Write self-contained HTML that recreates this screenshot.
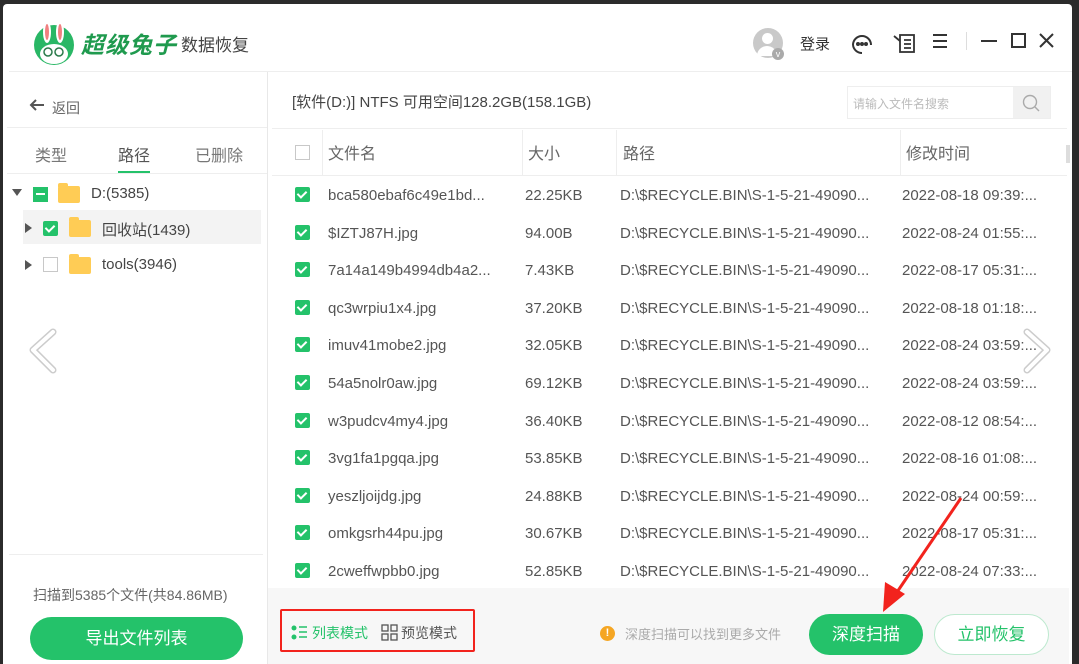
<!DOCTYPE html>
<html><head><meta charset="utf-8"><style>
*{margin:0;padding:0;box-sizing:border-box}
body{width:1079px;height:662px;background:#2b2b2b;position:relative;overflow:hidden;font-family:"Liberation Sans","Noto Sans CJK SC",sans-serif;color:#333}
.win{position:absolute;left:3px;top:4px;width:1069px;height:660px;background:#fff;border-radius:4px 4px 0 0;overflow:hidden}
.a{position:absolute}
.cb{position:absolute;width:15px;height:15px;background:#24c26a;border-radius:2px}
.cb:after{content:"";position:absolute;left:4px;top:2px;width:4px;height:7px;border:solid #fff;border-width:0 2px 2px 0;transform:rotate(45deg)}
.ecb{position:absolute;width:15px;height:15px;border:1px solid #c8c8c8;background:#fff}
.row{position:absolute;left:269px;width:795px;height:37px;font-size:15px;color:#555}
.row span{position:absolute;top:11px;white-space:nowrap}
.fold{position:absolute;width:22px;height:17px;background:#ffcc55;border-radius:2px}
.fold:before{content:"";position:absolute;left:0;top:-3px;width:10px;height:4px;background:#ffcc55;border-radius:2px 2px 0 0}
.hd{position:absolute;top:136px;font-size:16px;color:#666}
.vs{position:absolute;top:126px;width:1px;height:46px;background:#eee}
</style></head><body>
<div class="win">
<svg class="a" style="left:28px;top:16px" width="46" height="46" viewBox="0 0 46 46">
<circle cx="23" cy="25" r="20" fill="#29b765"/>
<ellipse cx="16" cy="12" rx="4" ry="11" fill="#fff"/><ellipse cx="29" cy="12" rx="4" ry="11" fill="#fff"/>
<ellipse cx="16" cy="12" rx="2" ry="8" fill="#f08080"/><ellipse cx="29" cy="12" rx="2" ry="8" fill="#f08080"/>
<ellipse cx="23" cy="34" rx="14" ry="10" fill="#fff"/>
<circle cx="17" cy="32" r="4" fill="none" stroke="#2a7a4a" stroke-width="1.5"/><circle cx="28" cy="32" r="4" fill="none" stroke="#2a7a4a" stroke-width="1.5"/>
</svg>
<div class="a" style="left:78px;top:22px;font-size:23px;font-weight:bold;color:#1f9a4e;font-style:italic;letter-spacing:1px">超级兔子</div>
<div class="a" style="left:178px;top:27px;font-size:17px;color:#444">数据恢复</div>
<div class="a" style="left:750px;top:24px;width:30px;height:30px;border-radius:50%;background:#c9c9c9"></div>
<div class="a" style="left:759px;top:29px;width:11px;height:11px;border-radius:50%;background:#fff"></div>
<div class="a" style="left:754px;top:42px;width:20px;height:10px;border-radius:10px 10px 0 0;background:#fff"></div>
<div class="a" style="left:769px;top:44px;width:12px;height:12px;border-radius:50%;background:#aaa;color:#fff;font-size:9px;text-align:center;line-height:12px">v</div>
<div class="a" style="left:797px;top:29px;font-size:15px;color:#333">登录</div>
<svg class="a" style="left:846px;top:26px" width="26" height="26" viewBox="0 0 26 26" fill="none" stroke="#333" stroke-width="2"><path d="M4 15a9 9 0 1 1 18 0"/><path d="M4 15a9 9 0 0 0 9 8"/><circle cx="9" cy="14" r="1" fill="#333"/><circle cx="13" cy="14" r="1" fill="#333"/><circle cx="17" cy="14" r="1" fill="#333"/></svg>
<svg class="a" style="left:889px;top:26px" width="26" height="26" viewBox="0 0 26 26" fill="none" stroke="#333" stroke-width="1.8"><rect x="8" y="5" width="14" height="17"/><path d="M2 6l6 5M12 10h7M12 14h7M12 18h7"/></svg>
<svg class="a" style="left:928px;top:28px" width="18" height="18" stroke="#333" stroke-width="2"><path d="M2 3h14M2 9h14M2 15h14"/></svg>
<div class="a" style="left:963px;top:28px;width:1px;height:18px;background:#ddd"></div>
<svg class="a" style="left:976px;top:26px" width="80" height="22" stroke="#333" stroke-width="2" fill="none"><path d="M2 11h16"/><rect x="33" y="4" width="13" height="13"/><path d="M61 4l13 13M74 4L61 17"/></svg>
<div class="a" style="left:6px;top:67px;width:1063px;height:1px;background:#eee"></div>
<svg class="a" style="left:26px;top:94px" width="16" height="14" stroke="#555" stroke-width="2" fill="none"><path d="M15 7H2M7 2L2 7l5 5"/></svg>
<div class="a" style="left:49px;top:94px;font-size:14px;color:#666">返回</div>
<div class="a" style="left:4px;top:123px;width:260px;height:1px;background:#eee"></div>
<div class="a" style="left:32px;top:138px;font-size:16px;color:#777">类型</div>
<div class="a" style="left:115px;top:138px;font-size:16px;color:#555">路径</div>
<div class="a" style="left:115px;top:167px;width:32px;height:3px;background:#24c26a"></div>
<div class="a" style="left:192px;top:138px;font-size:16px;color:#777">已删除</div>
<div class="a" style="left:4px;top:169px;width:260px;height:1px;background:#eee"></div>
<div class="a" style="left:9px;top:185px;width:0;height:0;border-left:5px solid transparent;border-right:5px solid transparent;border-top:7px solid #555"></div>
<div class="a" style="left:30px;top:183px;width:15px;height:15px;background:#24c26a"><div style="position:absolute;left:3px;top:6px;width:9px;height:2px;background:#fff"></div></div>
<div class="fold" style="left:55px;top:182px"></div>
<div class="a" style="left:88px;top:181px;font-size:15px;color:#444">D:(5385)</div>
<div class="a" style="left:20px;top:206px;width:238px;height:34px;background:#f3f3f3"></div>
<div class="a" style="left:22px;top:219px;border-top:5px solid transparent;border-bottom:5px solid transparent;border-left:7px solid #555"></div>
<div class="cb" style="left:40px;top:217px"></div>
<div class="fold" style="left:66px;top:216px"></div>
<div class="a" style="left:99px;top:215px;font-size:15px;color:#444">回收站(1439)</div>
<div class="a" style="left:22px;top:256px;border-top:5px solid transparent;border-bottom:5px solid transparent;border-left:7px solid #555"></div>
<div class="ecb" style="left:40px;top:253px"></div>
<div class="fold" style="left:66px;top:253px"></div>
<div class="a" style="left:99px;top:252px;font-size:15px;color:#444">tools(3946)</div>
<div class="a" style="left:6px;top:550px;width:254px;height:1px;background:#eee"></div>
<div class="a" style="left:30px;top:581px;font-size:14px;color:#666">扫描到5385个文件(共84.86MB)</div>
<div class="a" style="left:27px;top:613px;width:213px;height:43px;border-radius:22px;background:#24c26a;color:#fff;font-size:17px;text-align:center;line-height:43px">导出文件列表</div>
<div class="a" style="left:264px;top:68px;width:1px;height:592px;background:#e8e8e8"></div>
<div class="a" style="left:289px;top:87px;font-size:15px;color:#444">[软件(D:)] NTFS 可用空间128.2GB(158.1GB)</div>
<div class="a" style="left:844px;top:82px;width:204px;height:33px;border:1px solid #eee"></div>
<div class="a" style="left:850px;top:91px;font-size:12px;color:#bbb">请输入文件名搜索</div>
<div class="a" style="left:1010px;top:83px;width:37px;height:31px;background:#f1f1f1"></div>
<svg class="a" style="left:1018px;top:89px" width="20" height="20" fill="none" stroke="#aaa" stroke-width="1.4"><circle cx="9" cy="9" r="6.5"/><path d="M14 14l4 4"/></svg>
<div class="a" style="left:269px;top:124px;width:795px;height:1px;background:#eee"></div>
<div class="a" style="left:269px;top:171px;width:795px;height:1px;background:#eee"></div>
<div class="ecb" style="left:292px;top:141px"></div>
<div class="vs" style="left:319px"></div><div class="vs" style="left:519px"></div><div class="vs" style="left:613px"></div><div class="vs" style="left:897px"></div>
<div class="hd" style="left:325px">文件名</div><div class="hd" style="left:525px">大小</div><div class="hd" style="left:620px">路径</div><div class="hd" style="left:903px">修改时间</div>
<div class="a" style="left:1063px;top:141px;width:4px;height:18px;background:#ddd"></div>
<div id="rows"></div>
<div class="a" style="left:265px;top:584px;width:801px;height:76px;background:#f7f7f7"></div>
<div class="a" style="left:277px;top:605px;width:195px;height:43px;border:2px solid #f2231d;border-radius:2px"></div>
<svg class="a" style="left:288px;top:621px" width="18" height="16"><circle cx="3" cy="3" r="2.5" fill="#24c26a"/><circle cx="3" cy="12" r="2.5" fill="#24c26a"/><path d="M8 2h8M8 7h8M8 12h8" stroke="#24c26a" stroke-width="1.5"/></svg>
<div class="a" style="left:309px;top:619px;font-size:14px;color:#24c26a">列表模式</div>
<svg class="a" style="left:378px;top:620px" width="18" height="18" fill="none" stroke="#555" stroke-width="1.3"><rect x="1" y="1" width="6" height="6"/><rect x="10" y="1" width="6" height="6"/><rect x="1" y="10" width="6" height="6"/><rect x="10" y="10" width="6" height="6"/></svg>
<div class="a" style="left:398px;top:619px;font-size:14px;color:#555">预览模式</div>
<div class="a" style="left:597px;top:622px;width:15px;height:15px;border-radius:50%;background:#f5a623;color:#fff;font-size:11px;font-weight:bold;text-align:center;line-height:15px">!</div>
<div class="a" style="left:622px;top:620px;font-size:13px;color:#aaa">深度扫描可以找到更多文件</div>
<div class="a" style="left:806px;top:610px;width:114px;height:41px;border-radius:21px;background:#24c26a;color:#fff;font-size:17px;text-align:center;line-height:41px">深度扫描</div>
<div class="a" style="left:931px;top:610px;width:115px;height:41px;border-radius:21px;border:1px solid #bde9cf;background:#fff;color:#24c26a;font-size:17px;text-align:center;line-height:39px">立即恢复</div>
<svg class="a" style="left:20px;top:322px" width="40" height="50" fill="none"><path d="M30 6L10 24l20 20" stroke="#999" stroke-width="7" stroke-linecap="round" stroke-linejoin="round" opacity=".5"/><path d="M30 6L10 24l20 20" stroke="#fff" stroke-width="4" stroke-linecap="round" stroke-linejoin="round"/></svg>
<svg class="a" style="left:1014px;top:322px" width="40" height="50" fill="none"><path d="M10 6l20 18L10 44" stroke="#999" stroke-width="7" stroke-linecap="round" stroke-linejoin="round" opacity=".5"/><path d="M10 6l20 18L10 44" stroke="#fff" stroke-width="4" stroke-linecap="round" stroke-linejoin="round"/></svg>
<svg class="a" style="left:870px;top:490px" width="100" height="120"><path d="M88 4L20 104" stroke="#f2231d" stroke-width="3"/><path d="M10 118L12 88L32 100Z" fill="#f2231d"/></svg>
</div>
<script>
var d=[["bca580ebaf6c49e1bd...","22.25KB","2022-08-18 09:39:..."],["$IZTJ87H.jpg","94.00B","2022-08-24 01:55:..."],["7a14a149b4994db4a2...","7.43KB","2022-08-17 05:31:..."],["qc3wrpiu1x4.jpg","37.20KB","2022-08-18 01:18:..."],["imuv41mobe2.jpg","32.05KB","2022-08-24 03:59:..."],["54a5nolr0aw.jpg","69.12KB","2022-08-24 03:59:..."],["w3pudcv4my4.jpg","36.40KB","2022-08-12 08:54:..."],["3vg1fa1pgqa.jpg","53.85KB","2022-08-16 01:08:..."],["yeszljoijdg.jpg","24.88KB","2022-08-24 00:59:..."],["omkgsrh44pu.jpg","30.67KB","2022-08-17 05:31:..."],["2cweffwpbb0.jpg","52.85KB","2022-08-24 07:33:..."]];
var h="";d.forEach(function(r,i){var t=172+i*37.6;h+='<div class="row" style="top:'+t+'px"><div class="cb" style="left:23px;top:11px"></div><span style="left:56px">'+r[0]+'</span><span style="left:253px">'+r[1]+'</span><span style="left:348px">D:\\$RECYCLE.BIN\\S-1-5-21-49090...</span><span style="left:630px">'+r[2]+'</span></div>'});
document.getElementById("rows").outerHTML=h;
</script>
</body></html>
